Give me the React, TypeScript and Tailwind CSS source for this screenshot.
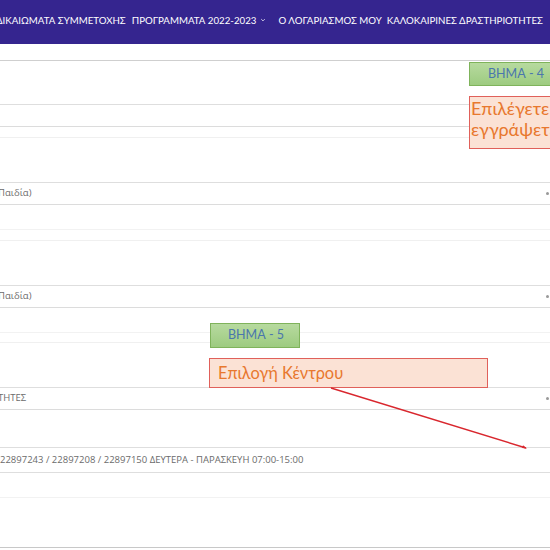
import React from 'react';

const navFont = { fontFamily: 'Lato, "Noto Sans", sans-serif' };

// one field row: text inside, line at the bottom
const Field: React.FC<{ text?: string; arrow?: boolean }> = ({ text, arrow }) => (
  <div className="relative flex h-[22px] items-center border-b border-[#dcdcdc] text-[#6b6b6b]">
    {text && (
      <span className="-ml-[2px] whitespace-nowrap font-['Open_Sans',sans-serif] text-[9.5px]">{text}</span>
    )}
    {arrow && <span className="absolute right-[1px] top-[9px] h-[3px] w-[3px] rounded-full bg-[#999]" />}
  </div>
);

const App: React.FC = () => {
  return (
    <div className="relative h-[550px] w-[550px] overflow-hidden bg-white">
      {/* Top navigation */}
      <header className="flex h-[44px] items-start bg-[#35258f] pt-[13px] text-[9.7px] text-white" style={navFont}>
        <nav className="flex items-center whitespace-nowrap">
          <span className="-ml-[4px]">ΔΙΚΑΙΩΜΑΤΑ ΣΥΜΜΕΤΟΧΗΣ</span>
          <span className="ml-[6px] flex items-center">
            ΠΡΟΓΡΑΜΜΑΤΑ 2022-2023
            <svg className="ml-[4px] h-[6px] w-[6px]" viewBox="0 0 10 10" fill="none" stroke="currentColor" strokeWidth="1.2">
              <path d="M2 3.5l3 3 3-3" />
            </svg>
          </span>
          <span className="ml-[12px]">Ο ΛΟΓΑΡΙΑΣΜΟΣ ΜΟΥ</span>
          <span className="ml-[5px]">ΚΑΛΟΚΑΙΡΙΝΕΣ ΔΡΑΣΤΗΡΙΟΤΗΤΕΣ</span>
        </nav>
      </header>

      {/* Form body */}
      <div className="flex flex-col">
        <div className="h-[17px] border-b border-[#cfcfcf]" />
        <div className="h-[44px] border-b border-[#dedede]" />
        <Field />
        <div className="h-[11px] border-b border-[#f0f0f0]" />
        <div className="h-[45px] border-b border-[#dedede]" />
        <Field text="Παιδία)" arrow />
        <div className="h-[25px] border-b border-[#f2f2f2]" />
        <div className="h-[11px] border-b border-[#f0f0f0]" />
        <div className="h-[45px] border-b border-[#dedede]" />
        <Field text="Παιδία)" arrow />
        <div className="h-[25px] border-b border-[#f2f2f2]" />
        <div className="h-[10px] border-b border-[#f0f0f0]" />
        <div className="h-[45px] border-b border-[#dedede]" />
        <Field text="ΤΗΤΕΣ" arrow />
        <div className="h-[38px] border-b border-[#dedede]" />
        <div className="flex h-[25px] items-center border-b border-[#dedede] text-[#6b6b6b]">
          <span className="whitespace-nowrap font-['Open_Sans',sans-serif] text-[9.5px]">
            22897243 / 22897208 / 22897150 ΔΕΥΤΕΡΑ - ΠΑΡΑΣΚΕΥΗ 07:00-15:00
          </span>
        </div>
        <div className="h-[25px] border-b border-[#f2f2f2]" />
        <div className="h-[50px] border-b border-[#c8c8c8]" />
      </div>

      {/* Annotations pasted over the screenshot */}
      <div className="absolute left-[469px] top-[62px] flex h-[24px] w-[90px] items-center border border-[#7fb35b] bg-gradient-to-b from-[#b7da9f] to-[#9dcb80] pl-[18px] font-['Lato',sans-serif] text-[12.5px] text-[#4a76ad]">
        ΒΗΜΑ - 4
      </div>
      <div className="absolute left-[469px] top-[96px] h-[53px] w-[100px] border border-[#e0605a] bg-[#fbe2d5] pl-[1px] pt-[1px] font-['Lato',sans-serif] text-[18px] leading-[21px] text-[#e8782e]">
        Επιλέγετε
        <br />
        εγγράψετε
      </div>

      <div className="absolute left-[210px] top-[323px] flex h-[25px] w-[90px] items-center border border-[#7fb35b] bg-gradient-to-b from-[#b7da9f] to-[#9dcb80] pl-[17px] font-['Lato',sans-serif] text-[12.5px] text-[#4a76ad]">
        ΒΗΜΑ - 5
      </div>
      <div className="absolute left-[209px] top-[358px] flex h-[30px] w-[279px] items-center border border-[#e0605a] bg-[#fbe2d5] pl-[8px] font-['Lato',sans-serif] text-[16.4px] text-[#e8782e]">
        Επιλογή Κέντρου
      </div>

      <svg className="pointer-events-none absolute left-0 top-0" width="550" height="550" viewBox="0 0 550 550">
        <line x1="331" y1="388" x2="526" y2="448" stroke="#d9272e" strokeWidth="1.4" />
        <path d="M527 448.5l-4-3.2 -1 2.6z" fill="#d9272e" />
      </svg>
    </div>
  );
};

export default App;
